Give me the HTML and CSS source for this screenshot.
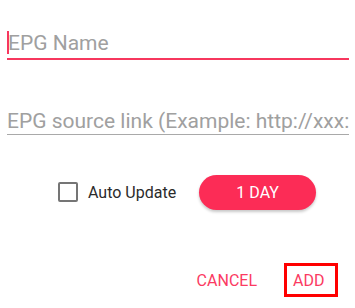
FILE: index.html
```html
<!DOCTYPE html>
<html>
<head>
<meta charset="utf-8">
<link rel="stylesheet" href="styles.css">
</head>
<body>
<div class="dialog">
  <div class="field field-focused">
    <span class="cursor"></span><span class="placeholder">EPG Name</span>
  </div>
  <div class="field field-idle">
    <span class="placeholder">EPG source link (Example: http://xxx:</span>
  </div>
  <div class="options">
    <span class="checkbox"></span>
    <span class="check-label">Auto Update</span>
    <button class="pill">1 DAY</button>
  </div>
  <div class="actions">
    <button class="text-btn">CANCEL</button>
    <button class="text-btn add-btn">ADD</button>
  </div>
</div>
</body>
</html>
```
FILE: styles.css
```css
html, body {
  margin: 0;
  padding: 0;
  background: #ffffff;
}
body {
  font-family: Roboto, "Liberation Sans", sans-serif;
  width: 355px;
  height: 308px;
  overflow: hidden;
}
.dialog {
  padding: 31px 6px 0 7px;
}
.field {
  height: 24px;
  line-height: 24px;
  font-size: 21px;
  white-space: nowrap;
  overflow: hidden;
  display: flex;
  align-items: center;
}
.field-focused {
  padding-bottom: 3px;
  border-bottom: 2px solid #f7375e;
}
.field-idle {
  margin-top: 49px;
  padding-bottom: 1px;
  border-bottom: 1px solid #a9a9a9;
}
.placeholder {
  color: #a0a0a0;
}
.cursor {
  display: inline-block;
  width: 2px;
  height: 23px;
  background: #f7375e;
  margin-right: -1px;
  position: relative;
  top: -1px;
}
.options {
  margin-top: 40px;
  height: 35px;
  display: flex;
  align-items: center;
  padding-left: 51px;
}
.checkbox {
  width: 16px;
  height: 16px;
  border: 2px solid #757575;
  border-radius: 2px;
  margin-top: -1px;
}
.check-label {
  margin-left: 10px;
  font-size: 16px;
  color: #2b2b2b;
}
.pill {
  margin-left: 23px;
  width: 117px;
  height: 35px;
  border: none;
  border-radius: 18px;
  background: #fc2c56;
  color: #ffffff;
  font-family: inherit;
  font-size: 16px;
  padding: 0;
  box-shadow: 0 2px 3px rgba(0, 0, 0, 0.22);
}
.actions {
  margin-top: 53px;
  display: flex;
  justify-content: flex-end;
  align-items: center;
  padding-right: 11px;
  height: 34px;
}
.text-btn {
  background: none;
  border: none;
  padding: 0;
  font-family: inherit;
  font-size: 16px;
  color: #fb3a62;
}
.add-btn {
  margin-left: 27px;
  width: 54px;
  height: 34px;
  border: 3px solid #ff0000;
  text-align: left;
  padding-left: 6px;
}
```
